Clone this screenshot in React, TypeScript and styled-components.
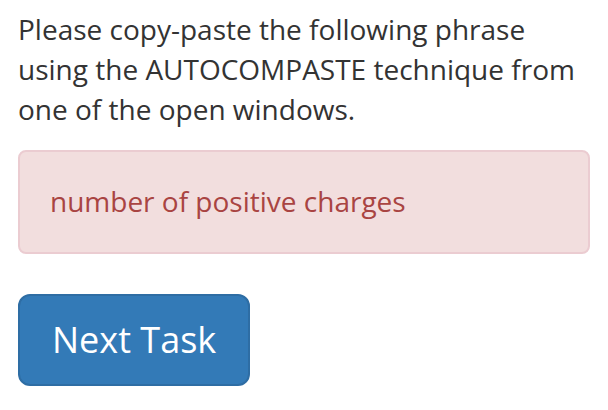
import React from "react";
import styled, { createGlobalStyle } from "styled-components";

const Global = createGlobalStyle`
  html, body { margin: 0; padding: 0; background: #fff; }
  body {
    font-family: "Open Sans", "Liberation Sans", sans-serif;
    font-size: 28px;
    line-height: 1.42857;
    color: #333;
  }
  * { box-sizing: border-box; }
`;

const Page = styled.main`
  display: flex;
  flex-direction: column;
  align-items: flex-start;
  padding: 10px 18px 0;
`;

const Instructions = styled.p`
  margin: 0 0 20px;
  max-width: 572px;
`;

const Alert = styled.div`
  align-self: stretch;
  padding: 30px;
  margin-bottom: 40px;
  background: #f2dede;
  border: 2px solid #ebccd1;
  border-radius: 8px;
  color: #a94442;
`;

const Button = styled.button`
  font-family: inherit;
  font-size: 36px;
  line-height: 1.3333333;
  padding: 20px 32px;
  color: #fff;
  background: #337ab7;
  border: 2px solid #2e6da4;
  border-radius: 12px;
  cursor: pointer;
`;

export default function App() {
  return (
    <>
      <Global />
      <Page>
        <Instructions>
          Please copy-paste the following phrase using the AUTOCOMPASTE technique from one of the open windows.
        </Instructions>
        <Alert>number of positive charges</Alert>
        <Button>Next Task</Button>
      </Page>
    </>
  );
}
